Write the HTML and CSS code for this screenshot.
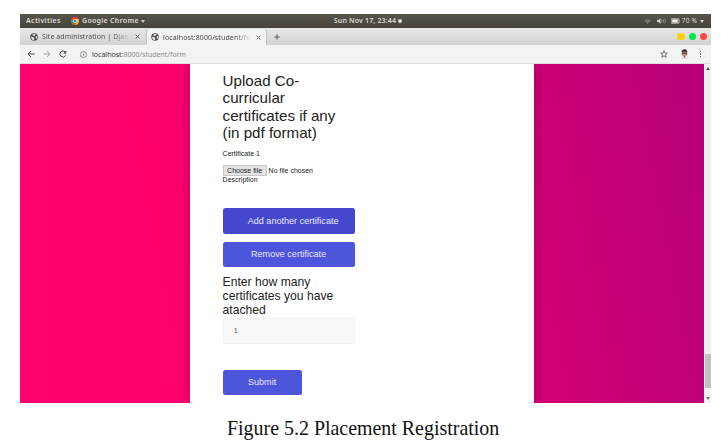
FILE: index.html
```html
<!DOCTYPE html>
<html lang="en">
<head>
<meta charset="utf-8">
<title>Placement Registration</title>
<link rel="stylesheet" href="styles.css">
</head>
<body>
<figure class="figure">
  <div class="screen">
    <header class="system-bar">
      <div class="system-left">
        <span class="activities">Activities</span>
        <svg class="chrome" viewBox="0 0 16 16"><circle cx="8" cy="8" r="8" fill="#e94335"/><path d="M1.1 4 5 10.5 8 16A8 8 0 0 1 1.1 4Z" fill="#33a853"/><path d="M8 4h6.9A8 8 0 0 1 8 16l3.5-6Z" fill="#fbbc05"/><circle cx="8" cy="8" r="4" fill="#fff"/><circle cx="8" cy="8" r="3.1" fill="#4285f4"/></svg>
        <span class="app-name">Google Chrome</span>
        <span class="caret"></span>
      </div>
      <div class="clock"><span class="clock-text">Sun Nov 17, 23:44</span><span class="dot"></span></div>
      <div class="system-right">
        <svg class="wifi" viewBox="0 0 14 10" fill="none" stroke="#aaa89f" stroke-width="1.6"><path d="M1 4q6-5 12 0M3.5 6.5q3.5-3 7 0"/><circle cx="7" cy="8" r=".5"/></svg>
        <svg class="sound" viewBox="0 0 18 12"><path d="M0 4h3l4-4v12L3 8H0Z" fill="#d2d0c8"/><path d="M9 3q2 3 0 6M12 2q3 4 0 8M15 1q4 5 0 10" fill="none" stroke="#a6a49b" stroke-width="1.3"/></svg>
        <svg class="battery" viewBox="0 0 16 10"><path d="M.6.6h13v8.8H.6ZM14 3h2v4h-2" fill="none" stroke="#c8c6be" stroke-width="1.2"/><path d="M2 2h10v6H2Z" fill="#efeee9"/></svg>
        <span class="percent">70 %</span>
        <span class="caret"></span>
      </div>
    </header>
    <nav class="tabs">
      <div class="tab">
        <svg class="globe" viewBox="0 0 16 16"><circle cx="8" cy="8" r="7.5" fill="#46484b"/><path d="M2 7l4 1 3 3-2 4Q2 13 2 7ZM6 2l5 0-1 3-3 1-2-1ZM11 7l3-1v4l-2 2Z" fill="#e4e4e4"/></svg>
        <span class="tab-title">Site administration | Djan</span>
        <svg class="close" viewBox="0 0 8 8"><path d="M1 1l6 6M7 1 1 7"/></svg>
      </div>
      <div class="tab tab-active">
        <svg class="globe" viewBox="0 0 16 16"><circle cx="8" cy="8" r="7.5" fill="#46484b"/><path d="M2 7l4 1 3 3-2 4Q2 13 2 7ZM6 2l5 0-1 3-3 1-2-1ZM11 7l3-1v4l-2 2Z" fill="#f2f3f4"/></svg>
        <span class="tab-title">localhost:8000/student/fo</span>
        <svg class="close" viewBox="0 0 8 8"><path d="M1 1l6 6M7 1 1 7"/></svg>
      </div>
      <svg class="plus" viewBox="0 0 8 8"><path d="M4 .5v7M.5 4h7"/></svg>
      <div class="window-buttons"><i class="minimize"></i><i class="maximize"></i><i class="quit"></i></div>
    </nav>
    <div class="toolbar">
      <svg class="nav-icon" viewBox="0 0 16 16"><path d="M15 8H2M8 2 2 8l6 6"/></svg>
      <svg class="nav-icon forward" viewBox="0 0 16 16"><path d="M1 8h13M8 2l6 6-6 6"/></svg>
      <svg class="nav-icon reload" viewBox="0 0 16 16"><path d="M13.2 11A6 6 0 1 1 12.5 4"/><path d="M14.5 1v6h-6Z" class="solid"/></svg>
      <div class="address">
        <svg class="info" viewBox="0 0 16 16"><circle cx="8" cy="8" r="7"/><path d="M8 7v5M8 4v1.5"/></svg>
        <span class="url"><b>localhost</b>:8000/student/form</span>
        <svg class="star" viewBox="0 0 16 16"><path d="m8 1.5 1.9 4.6 4.9.4-3.7 3.2 1.1 4.8L8 11.9l-4.2 2.6 1.1-4.8L1.200 6.500l4.900-.4Z"/></svg>
      </div>
      <svg class="avatar" viewBox="0 0 8 11"><path d="M1 4Q0 0 4 0t3 4v3H1Z" fill="#3d2b2b"/><path d="M1.500 3h5v3Q6 9 4 9T1.500 6Z" fill="#c4917d"/><path d="M1 4h6v1.200H1Z" fill="#453a3c"/><path d="M0 11q1-3 4-3t4 3Z" fill="#d9dadd"/><path d="m3 8 1 2 1-2Z" fill="#9a2f37"/></svg>
      <span class="menu"><i></i><i></i><i></i></span>
    </div>
    <div class="viewport">
      <main class="page">
        <form class="card">
          <h2 class="upload-title">Upload Co-<br>curricular<br>certificates if any<br>(in pdf format)</h2>
          <p class="certificate">Certificate 1</p>
          <div class="file"><span class="choose">Choose file</span><span>No file chosen</span></div>
          <p class="description">Description</p>
          <button type="button" class="button add">Add another certificate</button>
          <button type="button" class="button remove">Remove certificate</button>
          <h3 class="count-title">Enter how many<br>certificates you have<br>atached</h3>
          <div class="count">1</div>
          <button type="button" class="button submit">Submit</button>
        </form>
      </main>
      <div class="scrollbar"><i class="up"></i><i class="thumb"></i><i class="down"></i></div>
    </div>
  </div>
  <figcaption class="caption">Figure 5.2 Placement Registration</figcaption>
</figure>
</body>
</html>
```
FILE: styles.css
```css
* { box-sizing: border-box; }
body { margin: 0; background: #fff; overflow: hidden; }
.figure { margin: 0; padding: 14px 16px 0 20px; width: 727px; height: 440px; }
svg { display: block; flex: none; }
.screen { width: 691px; height: 389px; font-family: "Noto Sans", sans-serif; }

.system-bar { display: grid; grid-template-columns: 1fr auto 1fr; align-items: center; height: 14px; padding: 0 7px 0 6px; background: linear-gradient(#57544b, #45433d); color: #dfdbd2; font-size: 7px; font-weight: 600; line-height: 14px; letter-spacing: .15px; white-space: nowrap; }
.system-left, .system-right, .clock { display: flex; align-items: center; }
.clock { padding-left: 6px; }
.activities { width: 45px; letter-spacing: .35px; }
.chrome { width: 8px; height: 8px; margin-right: 3px; }
.app-name { width: 56px; letter-spacing: .3px; }
.caret { margin-left: 3px; border: 2.500px solid transparent; border-top: 3px solid #d4d1c8; border-bottom: 0; }
.dot { width: 4px; height: 4px; margin-left: 2px; border-radius: 50%; background: #dfdbd2; }
.system-right { justify-content: flex-end; }
.wifi { width: 7px; height: 5px; }
.sound { width: 9px; height: 6px; margin-left: 6px; }
.battery { width: 9px; height: 6px; margin: 0 2px 0 5px; }
.percent { font-weight: 400; font-size: 6.500px; }

.tabs { display: flex; align-items: center; height: 17px; background: linear-gradient(#e7e7e7, #d3d3d3); color: #555; font-size: 7px; }
.tab { display: flex; align-items: center; height: 17px; width: 126px; padding: 0 6px 0 10px; letter-spacing: .07px; white-space: nowrap; }
.tab-active { width: 121px; padding: 0 5px 0 4px; letter-spacing: .12px; background: #f2f3f4; border: 1px solid #c1c1c1; border-bottom: 0; border-top-color: #e2e2e2; border-radius: 4px 4px 0 0; color: #45484b; }
.globe { width: 8px; height: 8px; margin-right: 4px; }
.tab-title { flex: 1; overflow: hidden; -webkit-mask-image: linear-gradient(90deg, #000 82%, transparent); mask-image: linear-gradient(90deg, #000 82%, transparent); }
.close { width: 5px; height: 5px; margin-left: 5px; fill: none; stroke: #55585b; stroke-width: 1.500; }
.plus { width: 6px; height: 6px; margin-left: 7px; fill: none; stroke: #55585b; stroke-width: 1.300; }
.window-buttons { display: flex; gap: 4px; margin-left: auto; padding-right: 4px; }
.window-buttons i { width: 7.200px; height: 7.200px; border-radius: 50%; }
.minimize { background: #ffd000; }
.maximize { background: #00e64d; }
.quit { background: #ff4545; }

.toolbar { display: flex; align-items: center; height: 19px; padding: 0 10px 0 7px; background: #f2f3f5; border-bottom: 1px solid #dedfe1; }
.nav-icon { width: 8px; height: 8px; margin-right: 8px; fill: none; stroke: #45484b; stroke-width: 2; }
.forward { stroke: #a2a4a6; }
.reload { margin-right: 7px; }
.solid { fill: #45484b; stroke: none; }
.address { flex: 1; display: flex; align-items: center; height: 15px; padding: 0 3px 0 6px; border-radius: 8px; background: #f2f3f4; }
.info { width: 7px; height: 7px; margin-right: 5px; fill: none; stroke: #66696c; stroke-width: 1.600; }
.url { flex: 1; font-size: 7px; color: #8a8e92; white-space: nowrap; }
.url b { font-weight: 400; color: #34373a; }
.star { width: 8px; height: 8px; fill: none; stroke: #505458; stroke-width: 1.500; }
.avatar { width: 7px; height: 10px; margin: 0 12px 0 10px; }
.menu { display: flex; flex-direction: column; gap: 1.200px; }
.menu i { width: 1.500px; height: 1.500px; border-radius: 50%; background: #505458; }

.viewport { display: flex; height: 339px; }
.page { flex: 1; padding-left: 170px; overflow: hidden; background: linear-gradient(79deg, #ff006c 0%, #ff006c 22%, #b60079 100%); }
.card { width: 344px; height: 339px; padding: 8px 0 0 32.600px; background: #fff; box-shadow: 0 0 12px rgba(0, 0, 0, .22); color: #222; font-family: "Liberation Sans", Arial, sans-serif; }
.upload-title, .count-title, p { margin: 0; font-weight: 400; white-space: nowrap; }
.upload-title { font-size: 15.150px; line-height: 17.400px; }
.certificate { margin-top: 7px; font-size: 7px; line-height: 9px; }
.file { display: flex; align-items: center; height: 11px; margin-top: 7.400px; gap: 2px; font-size: 7px; }
.choose { width: 44px; height: 11px; border: 1px solid #c8c8c8; background: #e4e4e4; line-height: 9px; text-align: center; }
.description { font-size: 7px; line-height: 8px; }
.button { display: block; height: 25.500px; padding: 0; border: 0; border-radius: 2.500px; background: #4d55da; color: #e7e8fb; font: 9.080px "Liberation Sans", Arial, sans-serif; }
.add { width: 132px; margin-top: 24px; padding-left: 9px; background: #4448cd; }
.remove { width: 132px; margin-top: 8px; }
.count-title { margin-top: 8px; font-size: 12.150px; line-height: 14.200px; }
.count { width: 132px; height: 26px; padding-left: 10px; border: 1px solid #f1f1f1; border-radius: 2px; background: #f9f9f9; color: #666; font-size: 8px; line-height: 24px; }
.submit { width: 79px; margin-top: 26px; }
.scrollbar { display: flex; flex-direction: column; align-items: center; width: 7px; padding: 3px 0; background: #f1f1f1; }
.up { border: 2px solid transparent; border-top: 0; border-bottom: 3px solid #555; }
.thumb { width: 6px; height: 34px; margin-top: auto; background: #c1c1c1; }
.down { margin-top: 9px; border: 2px solid transparent; border-bottom: 0; border-top: 3px solid #777; }
.caption { margin-top: 13px; padding-left: 207px; color: #111; font: 19.930px/24px "Liberation Serif", "Times New Roman", serif; white-space: nowrap; }
```
